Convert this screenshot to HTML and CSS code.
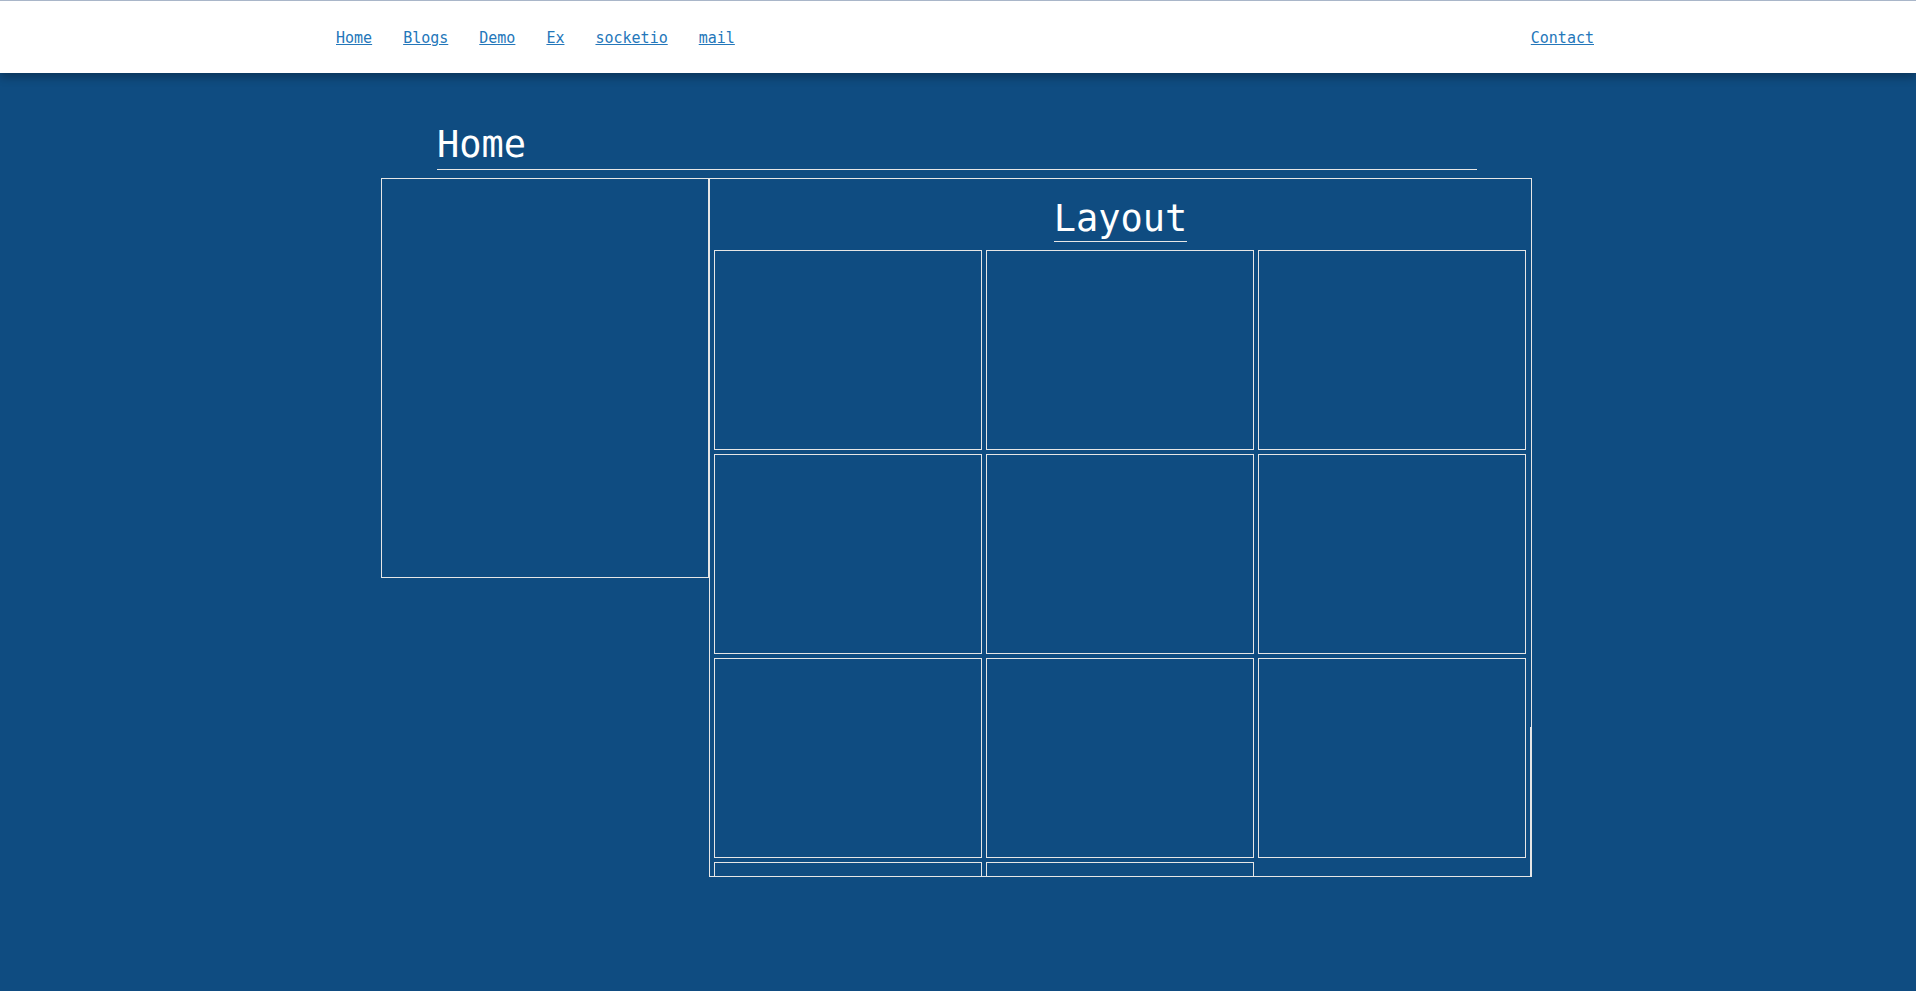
FILE: index.html
```html
<!DOCTYPE html>
<html lang="en">
<head>
<meta charset="utf-8">
<title>Home</title>
<link rel="stylesheet" href="styles.css">
</head>
<body>
<header class="topbar">
  <nav class="nav-left">
    <a href="#" class="nav-link">Home</a>
    <a href="#" class="nav-link">Blogs</a>
    <a href="#" class="nav-link">Demo</a>
    <a href="#" class="nav-link">Ex</a>
    <a href="#" class="nav-link">socketio</a>
    <a href="#" class="nav-link">mail</a>
  </nav>
  <nav class="nav-right">
    <a href="#" class="nav-link">Contact</a>
  </nav>
</header>
<main class="main">
  <h1 class="page-title">Home</h1>
  <div class="columns">
    <aside class="side-box"></aside>
    <section class="layout-box">
      <div class="layout-head"><h2 class="layout-title">Layout</h2></div>
      <div class="grid">
        <div class="cell"></div>
        <div class="cell"></div>
        <div class="cell"></div>
        <div class="cell"></div>
        <div class="cell"></div>
        <div class="cell"></div>
        <div class="cell"></div>
        <div class="cell"></div>
        <div class="cell"></div>
        <div class="cell"></div>
        <div class="cell"></div>
      </div>
      <div class="scroll-thumb"></div>
    </section>
  </div>
</main>
</body>
</html>
```

FILE: styles.css
```css
html, body {
  margin: 0;
  padding: 0;
  height: 100%;
  overflow: hidden;
}
body {
  background: #0f4c81;
  font-family: "DejaVu Sans Mono", "Liberation Mono", monospace;
  color: #ffffff;
}
.topbar {
  position: relative;
  z-index: 1;
  box-sizing: border-box;
  height: 73px;
  border-top: 1px solid #a9b6c9;
  background: #ffffff;
  display: flex;
  align-items: center;
  justify-content: space-between;
  padding: 1px 322px 0 336px;
  box-shadow: 0 4px 9px rgba(0, 0, 0, 0.3);
}
.nav-left {
  display: flex;
  gap: 31px;
}
.nav-link {
  font-size: 15px;
  color: #2477ba;
  text-decoration: underline;
}
.main {
  width: 1151px;
  margin: -1px 0 0 381px;
}
.page-title {
  font-size: 37px;
  font-weight: normal;
  line-height: 44px;
  margin: 51px 55px 8px 56px;
  padding: 0 0 2px 0;
  border-bottom: 1px solid #e6e6e6;
}
.columns {
  display: flex;
  align-items: flex-start;
}
.side-box {
  box-sizing: border-box;
  width: 328px;
  height: 400px;
  border: 1px solid #e6e6e6;
}
.layout-box {
  position: relative;
  box-sizing: border-box;
  width: 823px;
  height: 699px;
  border: 1px solid #e6e6e6;
  overflow: hidden;
}
.layout-head {
  display: flex;
  justify-content: center;
  padding-top: 18px;
}
.layout-title {
  font-size: 37px;
  font-weight: normal;
  line-height: 43px;
  margin: 0;
  padding: 0 0 1px 0;
  border-bottom: 1px solid #e6e6e6;
}
.grid {
  display: grid;
  grid-template-columns: repeat(3, 268px);
  grid-auto-rows: 200px;
  gap: 4px;
  padding: 0 5px 0 4px;
  margin-top: 8px;
}
.cell {
  box-sizing: border-box;
  border: 1px solid #e6e6e6;
}
.scroll-thumb {
  position: absolute;
  right: 0;
  bottom: 0;
  width: 1px;
  height: 149px;
  background: #e6e6e6;
}
```
